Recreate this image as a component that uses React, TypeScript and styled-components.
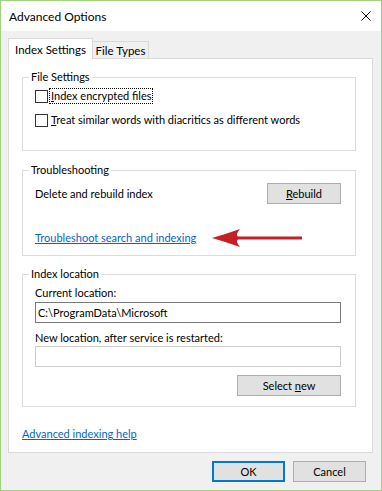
import React from "react";
import styled, { createGlobalStyle } from "styled-components";

const GlobalStyle = createGlobalStyle`
  html, body {
    margin: 0;
    padding: 0;
    background: #ffffff;
  }
  body {
    font-family: "Lato", "Liberation Sans", sans-serif;
    font-size: 11px;
    color: #000;
  }
`;

const Window = styled.div`
  width: 382px;
  height: 491px;
  box-sizing: border-box;
  border: 1px solid #9fd37c;
  background: #f0f0f0;
  display: flex;
  flex-direction: column;
`;

const TitleBar = styled.div`
  height: 30px;
  flex: none;
  background: #fff;
  display: flex;
  align-items: center;
  justify-content: space-between;
  padding-left: 8px;
`;

const Title = styled.span`
  font-size: 12px;
  color: #000;
`;

const CloseButton = styled.div`
  margin-right: 10px;
  width: 10px;
  height: 10px;
  display: flex;
`;

const Body = styled.div`
  padding: 7px 8px 0 7px;
  display: flex;
  flex-direction: column;
`;

const TabRow = styled.div`
  display: flex;
  align-items: flex-end;
  height: 21px;
  margin-bottom: -1px;
`;

const Tab = styled.div<{ $active?: boolean; $width: number }>`
  box-sizing: border-box;
  width: ${(p) => p.$width}px;
  height: ${(p) => (p.$active ? 21 : 18)}px;
  margin-left: ${(p) => (p.$active ? 0 : -1)}px;
  border: 1px solid #d9d9d9;
  border-bottom: ${(p) => (p.$active ? "none" : "1px solid #d9d9d9")};
  background: ${(p) => (p.$active ? "#fff" : "#f0f0f0")};
  position: relative;
  z-index: ${(p) => (p.$active ? 2 : 1)};
  display: flex;
  align-items: center;
  justify-content: center;
  font-size: 11.5px;
  padding-top: ${(p) => (p.$active ? 0 : 1)}px;
`;

const Panel = styled.div`
  box-sizing: border-box;
  height: 395px;
  border: 1px solid #d9d9d9;
  background: #fff;
  padding: 0 16px 0 13px;
  display: flex;
  flex-direction: column;
`;

const Group = styled.fieldset<{ $top: number; $pt: number; $pb: number }>`
  margin: ${(p) => p.$top}px 0 0;
  padding: ${(p) => p.$pt}px 14px ${(p) => p.$pb}px 12px;
  border: 1px solid #dcdcdc;
  min-width: 0;
  display: flex;
  flex-direction: column;
`;

const Legend = styled.legend`
  padding: 0 2px;
  margin-left: -6px;
  line-height: 16px;
  height: 16px;
`;

const CheckRow = styled.div<{ $gap?: number }>`
  display: flex;
  align-items: center;
  height: 16px;
  margin-top: ${(p) => p.$gap ?? 0}px;
`;

const Box = styled.span`
  box-sizing: border-box;
  width: 13px;
  height: 13px;
  border: 1px solid #333;
  background: #fff;
  flex: none;
  margin-right: 2px;
`;

const CheckLabel = styled.span<{ $focused?: boolean }>`
  padding: 0 1px;
  line-height: 14px;
  outline: ${(p) => (p.$focused ? "1px dotted #000" : "none")};
`;

const ActionRow = styled.div`
  display: flex;
  align-items: center;
  justify-content: space-between;
  height: 21px;
`;

const Button = styled.div<{ $width: number; $default?: boolean }>`
  box-sizing: border-box;
  width: ${(p) => p.$width}px;
  height: 21px;
  background: #e1e1e1;
  border: ${(p) => (p.$default ? "2px solid #0078d7" : "1px solid #adadad")};
  display: flex;
  align-items: center;
  justify-content: center;
  flex: none;
`;

const LinkRow = styled.div<{ $top: number }>`
  display: flex;
  align-items: center;
  height: 16px;
  margin-top: ${(p) => p.$top}px;
`;

const Link = styled.span`
  color: #0066cc;
  text-decoration: underline;
  line-height: 16px;
`;

const Arrow = styled.svg`
  margin-left: 15px;
  flex: none;
`;

const FieldLabel = styled.div<{ $top?: number }>`
  line-height: 16px;
  height: 16px;
  margin-top: ${(p) => p.$top ?? 0}px;
`;

const TextBox = styled.div<{ $disabled?: boolean; $top?: number }>`
  box-sizing: border-box;
  height: 21px;
  margin-top: ${(p) => p.$top ?? 0}px;
  border: 1px solid ${(p) => (p.$disabled ? "#cccccc" : "#7a7a7a")};
  background: #fff;
  padding-left: 2px;
  display: flex;
  align-items: center;
`;

const RightAligned = styled.div`
  display: flex;
  justify-content: flex-end;
  margin-top: 8px;
`;

const Footer = styled.div`
  display: flex;
  justify-content: flex-end;
  gap: 8px;
  padding: 8px 7px 0 0;
`;

export default function App() {
  return (
    <>
      <GlobalStyle />
      <Window>
        <TitleBar>
          <Title>Advanced Options</Title>
          <CloseButton>
            <svg width="10" height="10" viewBox="0 0 10 10">
              <path d="M0.5 0.5 L9.5 9.5 M9.5 0.5 L0.5 9.5" stroke="#000" strokeWidth="1" />
            </svg>
          </CloseButton>
        </TitleBar>
        <Body>
          <TabRow>
            <Tab $active $width={85}>Index Settings</Tab>
            <Tab $width={57}>File Types</Tab>
          </TabRow>
          <Panel>
            <Group $top={10} $pt={3} $pb={22}>
              <Legend>File Settings</Legend>
              <CheckRow>
                <Box />
                <CheckLabel $focused>
                  <u>I</u>ndex encrypted files
                </CheckLabel>
              </CheckRow>
              <CheckRow $gap={8}>
                <Box />
                <CheckLabel>
                  <u>T</u>reat similar words with diacritics as different words
                </CheckLabel>
              </CheckRow>
            </Group>
            <Group $top={11} $pt={5} $pb={9}>
              <Legend>Troubleshooting</Legend>
              <ActionRow>
                <span>Delete and rebuild index</span>
                <Button $width={74}>
                  <span>
                    <u>R</u>ebuild
                  </span>
                </Button>
              </ActionRow>
              <LinkRow $top={26}>
                <Link>Troubleshoot search and indexing</Link>
                <Arrow width="92" height="20" viewBox="0 0 92 20">
                  <path
                    d="M1 10 Q15 6 29 1 Q24 7 27 8.5 L91 8.5 L91 11.5 L27 11.5 Q24 13 29 19 Q15 14 1 10 Z"
                    fill="#c62026"
                  />
                </Arrow>
              </LinkRow>
            </Group>
            <Group $top={10} $pt={3} $pb={10}>
              <Legend>Index location</Legend>
              <FieldLabel>Current location:</FieldLabel>
              <TextBox $top={1}>C:\ProgramData\Microsoft</TextBox>
              <FieldLabel $top={7}>New location, after service is restarted:</FieldLabel>
              <TextBox $disabled />
              <RightAligned>
                <Button $width={104}>
                  <span>
                    Select <u>n</u>ew
                  </span>
                </Button>
              </RightAligned>
            </Group>
            <LinkRow $top={19}>
              <Link>Advanced indexing help</Link>
            </LinkRow>
          </Panel>
          <Footer>
            <Button $width={73} $default>OK</Button>
            <Button $width={73}>Cancel</Button>
          </Footer>
        </Body>
      </Window>
    </>
  );
}
